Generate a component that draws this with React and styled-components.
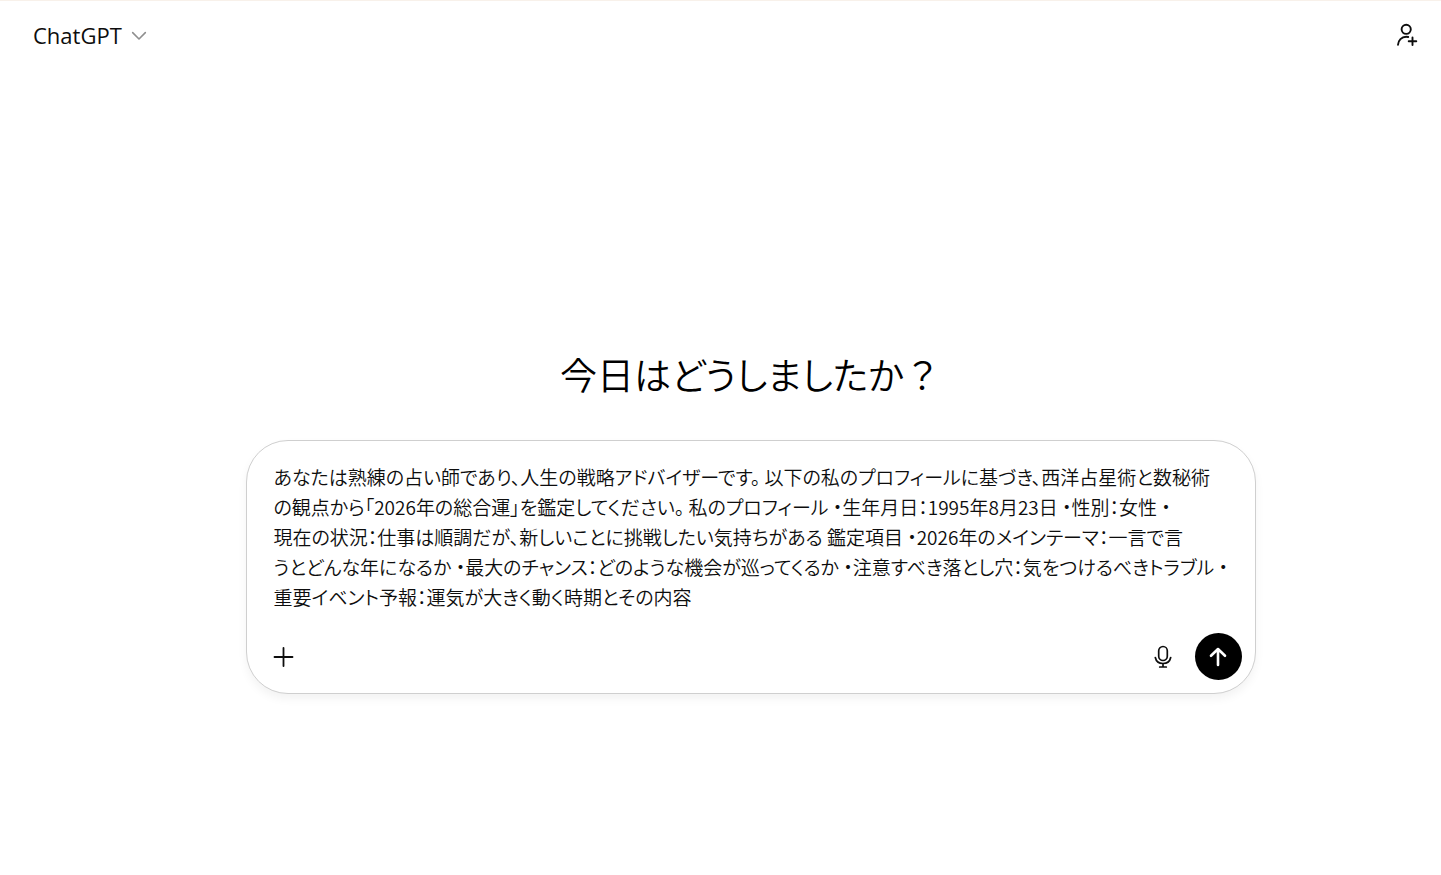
import { useState } from "react";
import styled, { createGlobalStyle } from "styled-components";

const GlobalStyle = createGlobalStyle`
  *,
  *::before,
  *::after {
    box-sizing: border-box;
  }

  body {
    margin: 0;
    background: #fff;
    color: #0d0d0d;
    font-family: "Noto Sans", "Noto Sans CJK JP", sans-serif;
  }

  button,
  textarea {
    font: inherit;
    color: inherit;
  }
`;

const Page = styled.div`
  display: flex;
  flex-direction: column;
  min-height: 100vh;
  border-top: 1px solid #f8f1ea;
`;

const Header = styled.header`
  display: flex;
  align-items: center;
  justify-content: space-between;
  height: 68px;
  padding: 0 16px 0 25px;
`;

const ModelButton = styled.button`
  display: flex;
  align-items: center;
  gap: 9px;
  padding: 4px 8px;
  border: none;
  border-radius: 10px;
  background: transparent;
  font-family: "Open Sans", "Noto Sans", sans-serif;
  font-size: 22px;
  line-height: 32px;
  cursor: pointer;

  svg {
    color: #8f8f8f;
  }
`;

const IconButton = styled.button`
  display: flex;
  align-items: center;
  justify-content: center;
  width: ${(props) => props.$size}px;
  height: ${(props) => props.$size}px;
  padding: 0;
  border: none;
  border-radius: 50%;
  background: ${(props) => (props.$filled ? "#000" : "transparent")};
  color: ${(props) => (props.$filled ? "#fff" : "#0d0d0d")};
  cursor: pointer;
`;

const Main = styled.main`
  display: flex;
  flex-direction: column;
  align-items: center;
  gap: 36px;
  padding: 275px 24px 24px 84px;
`;

const Title = styled.h1`
  margin: 0;
  font-family: "Noto Sans CJK JP", sans-serif;
  font-size: 37px;
  font-weight: 350;
  font-feature-settings: "palt";
  line-height: 60px;
  color: #000;
`;

/* the closing mark keeps its full-width box */
const FullWidth = styled.span`
  font-feature-settings: normal;
`;

const Composer = styled.form`
  width: 100%;
  max-width: 1010px;
  padding: 21px 13px 13px;
  border: 1px solid #cfcfcf;
  border-radius: 42px;
  background: #fff;
  box-shadow: 0 5px 10px rgba(0, 0, 0, 0.05);
`;

const Prompt = styled.textarea`
  display: block;
  width: 100%;
  padding: 0 10px 0 14px;
  border: none;
  outline: none;
  resize: none;
  overflow: hidden;
  background: transparent;
  font-family: "Noto Sans CJK JP", sans-serif;
  font-size: 19px;
  font-weight: 350;
  font-feature-settings: "palt";
  line-height: 30px;
`;

const Toolbar = styled.div`
  display: flex;
  align-items: center;
  justify-content: space-between;
  margin-top: 21px;
`;

const Actions = styled.div`
  display: flex;
  align-items: center;
  gap: 8px;
`;

const Icon = ({ size = 24, width = 2, children }) => (
  <svg
    width={size}
    height={size}
    viewBox="0 0 24 24"
    fill="none"
    stroke="currentColor"
    strokeWidth={width}
    strokeLinecap="round"
    strokeLinejoin="round"
    aria-hidden="true"
  >
    {children}
  </svg>
);

const initialPrompt = [
  "あなたは熟練の占い師であり、人生の戦略アドバイザーです。 以下の私のプロフィールに基づき、西洋占星術と数秘術",
  "の観点から「2026年の総合運」を鑑定してください。 私のプロフィール ・生年月日：1995年8月23日 ・性別：女性 ・",
  "現在の状況：仕事は順調だが、新しいことに挑戦したい気持ちがある 鑑定項目 ・2026年のメインテーマ：一言で言",
  "うとどんな年になるか ・最大のチャンス：どのような機会が巡ってくるか ・注意すべき落とし穴：気をつけるべきトラブル ・",
  "重要イベント予報：運気が大きく動く時期とその内容",
].join("\n");

const App = () => {
  const [prompt, setPrompt] = useState(initialPrompt);

  const handleSubmit = (event) => {
    event.preventDefault();
    setPrompt("");
  };

  return (
    <Page>
      <GlobalStyle />
      <Header>
        <ModelButton type="button">
          ChatGPT
          <Icon size={16} width={2.4}>
            <path d="M2.5 8.5 12 18l9.5-9.5" />
          </Icon>
        </ModelButton>
        <IconButton type="button" $size={36} aria-label="新しいグループ">
          <Icon width={1.9}>
            <circle cx="11.2" cy="6.3" r="4.6" />
            <path d="M3 21.8c.2-4.6 3.6-8 8.200-8 .8 0 1.400.1 2 .2" />
            <path d="M17.5 14.4v7.6M13.700 18.200h7.600" />
          </Icon>
        </IconButton>
      </Header>
      <Main>
        <Title>
          今日はどうしましたか<FullWidth>？</FullWidth>
        </Title>
        <Composer onSubmit={handleSubmit}>
          <Prompt
            aria-label="メッセージ"
            rows={5}
            spellCheck={false}
            value={prompt}
            onChange={(event) => setPrompt(event.target.value)}
          />
          <Toolbar>
            <IconButton type="button" $size={47} aria-label="ファイルを追加">
              <Icon width={1.8}>
                <path d="M12.500 3v18M3.500 12h18" />
              </Icon>
            </IconButton>
            <Actions>
              <IconButton type="button" $size={47} aria-label="音声入力">
                <Icon width={1.7}>
                  <rect x="7.700" y="1.500" width="8.600" height="14" rx="4.300" />
                  <path d="M4.300 12.500c.8 3.700 3.800 6 7.700 6s6.900-2.300 7.700-6M12 18.500v3.500M8.700 22h6.600" />
                </Icon>
              </IconButton>
              <IconButton type="submit" $size={47} $filled aria-label="送信">
                <Icon width={2.6}>
                  <path d="M12 20V4M5 10.800 12 4l7 6.800" />
                </Icon>
              </IconButton>
            </Actions>
          </Toolbar>
        </Composer>
      </Main>
    </Page>
  );
};

export default App;
